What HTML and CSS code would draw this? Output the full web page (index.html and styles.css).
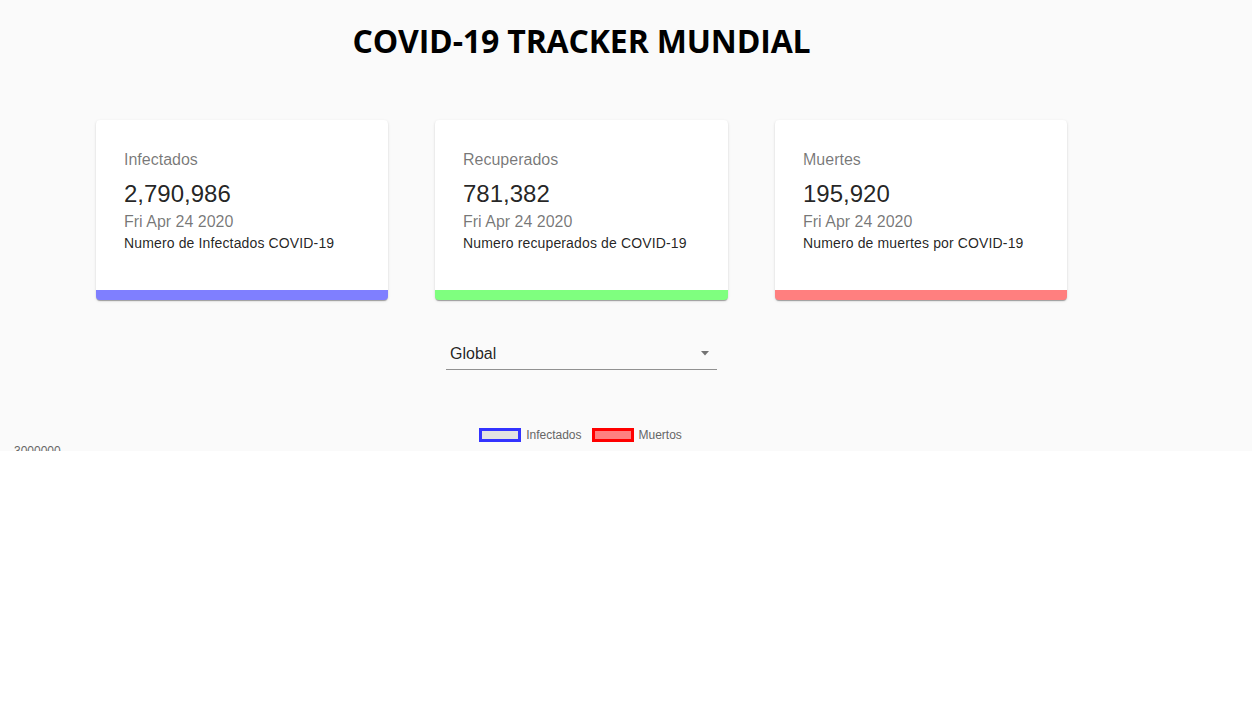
FILE: index.html
```html
<!DOCTYPE html>
<html lang="es">
<head>
<meta charset="utf-8">
<title>COVID-19 Tracker Mundial</title>
<link rel="stylesheet" href="styles.css">
</head>
<body>
<div class="page">
  <div class="app">
    <h1 class="title">COVID-19 TRACKER MUNDIAL</h1>
    <div class="cards">
      <div class="card infected">
        <div class="card-label">Infectados</div>
        <div class="card-number">2,790,986</div>
        <div class="card-date">Fri Apr 24 2020</div>
        <div class="card-desc">Numero de Infectados COVID-19</div>
      </div>
      <div class="card recovered">
        <div class="card-label">Recuperados</div>
        <div class="card-number">781,382</div>
        <div class="card-date">Fri Apr 24 2020</div>
        <div class="card-desc">Numero recuperados de COVID-19</div>
      </div>
      <div class="card deaths">
        <div class="card-label">Muertes</div>
        <div class="card-number">195,920</div>
        <div class="card-date">Fri Apr 24 2020</div>
        <div class="card-desc">Numero de muertes por COVID-19</div>
      </div>
    </div>
    <div class="select">
      <span class="select-value">Global</span>
      <svg class="select-arrow" width="10" height="5" viewBox="0 0 10 5"><path d="M1 0 L9 0 L5 4.5 Z" fill="rgba(0,0,0,0.54)"/></svg>
    </div>
    <div class="chart">
      <div class="legend">
        <span class="legend-item"><span class="swatch swatch-blue"></span>Infectados</span>
        <span class="legend-item"><span class="swatch swatch-red"></span>Muertos</span>
      </div>
      <div class="tick">3000000</div>
    </div>
  </div>
</div>
</body>
</html>
```

FILE: styles.css
```css
html, body {
  margin: 0;
  padding: 0;
  background: #ffffff;
}

.page {
  height: 451px;
  overflow: hidden;
  background: #fafafa;
}

.app {
  width: 1163px;
  display: flex;
  flex-direction: column;
  align-items: center;
  font-family: "Liberation Sans", Arial, sans-serif;
}

.title {
  margin: 21px 0 0 0;
  font-family: "Open Sans", sans-serif;
  font-weight: 700;
  font-size: 32px;
  line-height: 40px;
  color: #000;
  letter-spacing: -0.15px;
}

.cards {
  margin-top: 59px;
  display: flex;
  gap: 47px;
  width: 971px;
}

.card {
  box-sizing: border-box;
  width: 292px;
  height: 180px;
  background: #fff;
  border-radius: 4px;
  border-bottom: 10px solid;
  box-shadow: 0 2px 1px -1px rgba(0,0,0,0.2), 0 1px 1px 0 rgba(0,0,0,0.14), 0 1px 3px 0 rgba(0,0,0,0.12);
  padding: 28px 28px 0 28px;
}

.card.recovered { width: 293px; }

.infected { border-bottom-color: rgba(0, 0, 255, 0.5); }
.recovered { border-bottom-color: rgba(0, 255, 0, 0.5); }
.deaths { border-bottom-color: rgba(255, 0, 0, 0.5); }

.card-label {
  font-size: 16px;
  line-height: 24px;
  color: rgba(0,0,0,0.54);
  margin-bottom: 5.6px;
}

.card-number {
  font-size: 24px;
  line-height: 32px;
  color: rgba(0,0,0,0.87);
}

.card-date {
  font-size: 16px;
  line-height: 24px;
  margin-top: 0.5px;
  color: rgba(0,0,0,0.54);
}

.card-desc {
  font-size: 14px;
  line-height: 20px;
  margin-top: -1px;
  letter-spacing: 0.14px;
  color: rgba(0,0,0,0.87);
}

.select {
  margin-top: 37px;
  box-sizing: border-box;
  width: 271px;
  height: 33px;
  padding: 7px 0 6px 4px;
  border-bottom: 1px solid rgba(0,0,0,0.42);
  display: flex;
  align-items: center;
  justify-content: space-between;
}

.select-value {
  font-size: 16px;
  line-height: 19px;
  color: rgba(0,0,0,0.87);
}

.select-arrow {
  margin-right: 7px;
}

.chart {
  width: 1163px;
  margin-top: 58px;
  display: flex;
  flex-direction: column;
  align-items: center;
}

.legend {
  display: flex;
  gap: 10px;
  font-size: 12px;
  line-height: 14px;
  color: #666;
  margin-left: -2px;
}

.legend-item {
  display: flex;
  align-items: center;
}

.swatch {
  box-sizing: border-box;
  width: 42px;
  height: 14px;
  border: 3px solid;
  margin-right: 5px;
}

.swatch-blue {
  background: #e2e2e2;
  border-color: #3333ff;
}

.swatch-red {
  background: #ff8080;
  border-color: #ff0000;
}

.tick {
  align-self: flex-start;
  margin-left: 14px;
  margin-top: 2px;
  font-size: 12px;
  line-height: 14px;
  color: #666;
}
```
